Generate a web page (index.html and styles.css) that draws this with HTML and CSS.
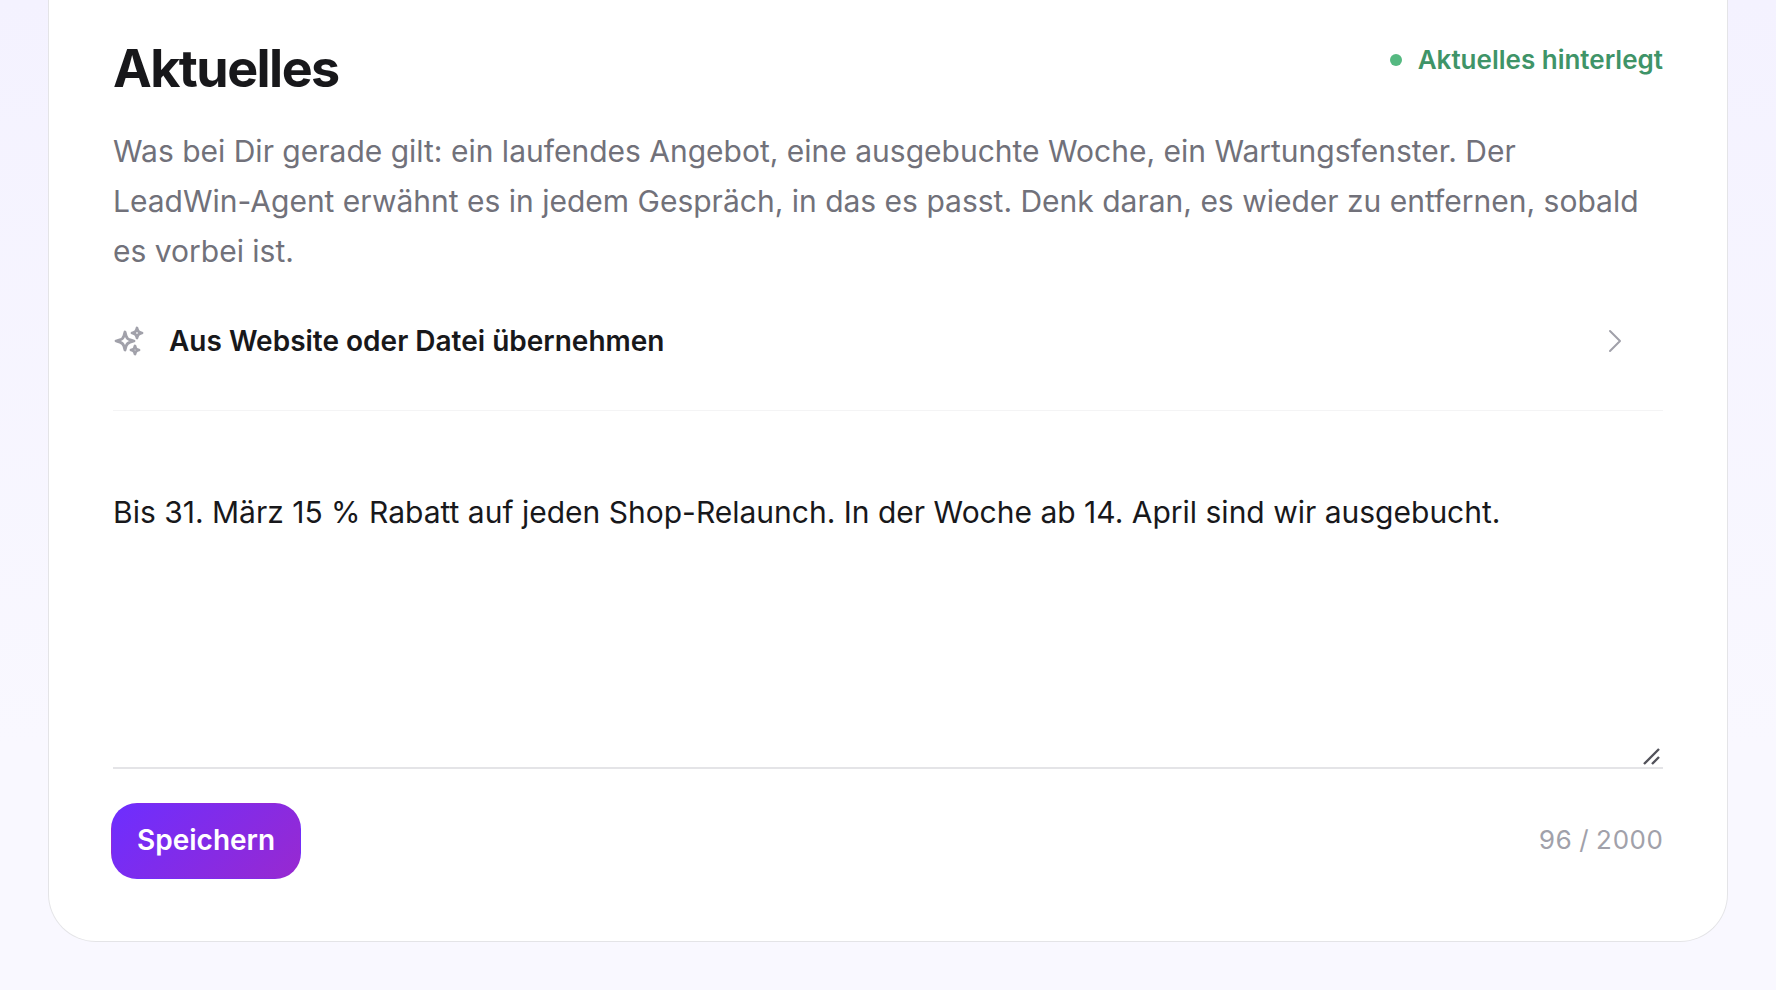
FILE: index.html
```html
<!DOCTYPE html>
<html lang="de">
<head>
    <meta charset="UTF-8">
    <meta name="viewport" content="width=device-width, initial-scale=1.0">
    <title>Aktuelles</title>
    <link rel="stylesheet" href="styles.css">
</head>
<body>
    <main class="card">
        <header class="card-header">
            <h1>Aktuelles</h1>
            <p class="status"><span class="dot"></span>Aktuelles hinterlegt</p>
        </header>
        <p class="intro">Was bei Dir gerade gilt: ein laufendes Angebot, eine ausgebuchte Woche, ein Wartungsfenster. Der LeadWin-Agent erwähnt es in jedem Gespräch, in das es passt. Denk daran, es wieder zu entfernen, sobald es vorbei ist.</p>
        <button type="button" class="import">
            <svg class="sparkles" viewBox="0 0 24 24" fill="none" stroke="currentColor" stroke-width="2.1" stroke-linecap="round" stroke-linejoin="round" aria-hidden="true">
                <path d="M9.813 15.904 9 18.75l-.813-2.846a4.5 4.5 0 0 0-3.09-3.09L2.25 12l2.846-.813a4.5 4.5 0 0 0 3.09-3.09L9 5.25l.813 2.846a4.5 4.5 0 0 0 3.09 3.09L15.75 12l-2.846.813a4.5 4.5 0 0 0-3.09 3.09Z"/>
                <path d="M18.259 8.715 18 9.75l-.259-1.035a3.375 3.375 0 0 0-2.455-2.456L14.25 6l1.036-.259a3.375 3.375 0 0 0 2.455-2.456L18 2.25l.259 1.035a3.375 3.375 0 0 0 2.456 2.456L21.75 6l-1.035.259a3.375 3.375 0 0 0-2.456 2.456Z"/>
                <path d="M16.894 20.567 16.5 21.75l-.394-1.183a2.25 2.25 0 0 0-1.423-1.423L13.5 18.75l1.183-.394a2.25 2.25 0 0 0 1.423-1.423l.394-1.183.394 1.183a2.25 2.25 0 0 0 1.423 1.423l1.183.394-1.183.394a2.25 2.25 0 0 0-1.423 1.423Z"/>
            </svg>
            <span>Aus Website oder Datei übernehmen</span>
            <svg class="chevron" viewBox="0 0 24 24" fill="none" stroke="currentColor" stroke-width="1.5" stroke-linecap="round" stroke-linejoin="round" aria-hidden="true">
                <path d="m8.25 4.5 7.5 7.5-7.5 7.5"/>
            </svg>
        </button>
        <form class="editor">
            <div class="field">
                <textarea id="news" name="news" maxlength="2000" aria-label="Aktuelles">Bis 31. März 15 % Rabatt auf jeden Shop-Relaunch. In der Woche ab 14. April sind wir ausgebucht.</textarea>
                <svg class="grip" viewBox="0 0 20 20" fill="none" stroke="currentColor" stroke-width="2.4" aria-hidden="true">
                    <path d="M2 18 17 3M10 18l7-7"/>
                </svg>
            </div>
            <div class="actions">
                <button type="submit" class="save">Speichern</button>
                <output for="news" class="counter">96 / 2000</output>
            </div>
        </form>
    </main>
</body>
</html>
```
FILE: styles.css
```css
* {
    box-sizing: border-box;
}
body {
    margin: 0;
    padding: 0 48px 48px;
    min-height: 100vh;
    font-family: Inter, "Liberation Sans", sans-serif;
    font-size: 30px;
    color: #18181b;
    background: linear-gradient(#f4f2ff, #f9f8ff 75%);
}
h1,
p {
    margin: 0;
}
button,
textarea {
    font: inherit;
    color: inherit;
    border: 0;
    background: none;
}
.card {
    padding: 36px 64px 62px;
    background: #fff;
    border: 1px solid #e4e4e7;
    border-top: 0;
    border-radius: 0 0 48px 48px;
}
.card-header {
    display: flex;
    justify-content: space-between;
    align-items: flex-start;
}
h1 {
    font-size: 52px;
    line-height: 66px;
    font-weight: 700;
    letter-spacing: -0.03em;
}
.status {
    display: flex;
    align-items: center;
    gap: 16px;
    font-size: 26px;
    line-height: 48px;
    font-weight: 600;
    color: #3f9468;
}
.dot {
    width: 12px;
    height: 12px;
    border-radius: 50%;
    background: #55b981;
}
.intro {
    margin-top: 24px;
    padding-right: 16px;
    line-height: 50px;
    color: #71717a;
}
.import {
    display: flex;
    align-items: center;
    gap: 24px;
    width: 100%;
    padding: 42px 32px 46px 0;
    font-size: 28px;
    line-height: 46px;
    font-weight: 600;
    text-align: left;
    border-bottom: 1px solid #f4f4f5;
    cursor: pointer;
}
.sparkles,
.chevron {
    width: 32px;
    height: 32px;
    color: #a1a1aa;
}
.chevron {
    margin-left: auto;
}
.field {
    position: relative;
    margin-top: 64px;
}
textarea {
    display: block;
    width: 100%;
    height: 294px;
    padding: 12px 0;
    line-height: 50px;
    border-bottom: 2px solid #e4e4e7;
    outline: none;
    resize: none;
}
/* Griff zum Vergrößern */
.grip {
    position: absolute;
    right: 1px;
    bottom: 3px;
    width: 20px;
    height: 20px;
    color: #52525b;
}
.actions {
    display: flex;
    justify-content: space-between;
    align-items: center;
    margin-top: 34px;
}
.save {
    margin-left: -2px;
    padding: 0 25px 2px;
    font-size: 28px;
    line-height: 72px;
    font-weight: 600;
    color: #fff;
    border: 1px solid transparent;
    border-radius: 26px;
    background: linear-gradient(135deg, #6d2eff, #9829d0);
    cursor: pointer;
}
.counter {
    padding-bottom: 3px;
    font-size: 26px;
    font-variant-numeric: tabular-nums;
    color: #a1a1aa;
}
```
